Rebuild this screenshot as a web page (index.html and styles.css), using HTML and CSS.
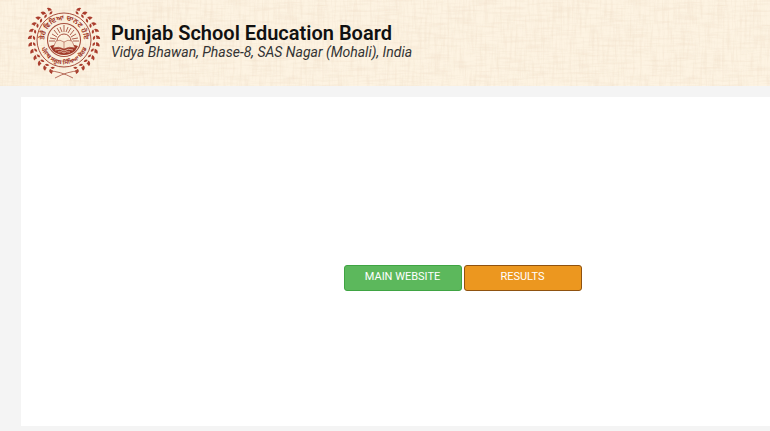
FILE: index.html
```html
<!DOCTYPE html>
<html lang="en">
<head>
  <meta charset="UTF-8" />
  <meta name="viewport" content="width=device-width, initial-scale=1.0"/>
  <title>Punjab School Education Board</title>
  <link rel="stylesheet" href="styles.css">
</head>
<body>

  <header class="header">
    <svg class="logo" viewBox="-36 -36 72 72" aria-hidden="true">
      <defs>
        <g id="leaf">
          <path d="M0 -32 Q0 -36 4 -36 Q4 -32 0 -32Z"/>
          <path d="M0 -31 Q1 -28 4 -29 Q3 -32 0 -31Z"/>
          <circle cx="3" cy="-33" r="0.7"/>
        </g>
        <g id="branch">
          <use href="#leaf" transform="rotate(22)"/>
          <use href="#leaf" transform="rotate(34)"/>
          <use href="#leaf" transform="rotate(46)"/>
          <use href="#leaf" transform="rotate(58)"/>
          <use href="#leaf" transform="rotate(70)"/>
          <use href="#leaf" transform="rotate(82)"/>
          <use href="#leaf" transform="rotate(94)"/>
          <use href="#leaf" transform="rotate(106)"/>
          <use href="#leaf" transform="rotate(118)"/>
          <use href="#leaf" transform="rotate(130)"/>
          <use href="#leaf" transform="rotate(142)"/>
          <use href="#leaf" transform="rotate(154)"/>
        </g>
        <path id="arc-top" d="M-18 8 A19.700 19.700 0 1 1 18 8"/>
        <path id="arc-bottom" d="M-24 -3 A24.200 24.200 0 1 0 24 -3"/>
      </defs>
      <g transform="translate(0 -3)">
        <g fill="#aa3d2d">
          <use href="#branch" transform="scale(-1 1)"/>
          <use href="#branch"/>
        </g>
        <g fill="none" stroke="#a8503f">
          <path d="M-15 31 Q-4 31 9 38 M15 31 Q4 31 -9 38" stroke-width="0.8"/>
          <circle r="27" stroke-width="1"/>
          <circle r="16.500" stroke-width="1.1"/>
          <path d="M-7 1 A7 7 0 0 1 7 1" stroke-width="1"/>
          <path stroke-width="0.9" d="M0 -8V-15 M-2 -8L-4 -13 M2 -8L4 -13 M-4 -7L-7 -12 M4 -7L7 -12 M-6 -5L-10 -10 M6 -5L10 -10 M-7 -3L-12 -6 M7 -3L12 -6 M-8 -1L-14 -2 M8 -1L14 -2 M-9 1L-15 1 M9 1L15 1"/>
        </g>
        <path fill="#a13828" d="M-14 6 Q-7 3 0 6 Q7 3 14 6 L11 11 Q6 15 0 15 Q-6 15 -11 11Z"/>
        <path fill="#f8e5d0" stroke="#a8503f" stroke-width="0.6" d="M-8 1 Q-4 -1 0 2 Q4 -1 8 1 L11 8 Q5 6 0 9 Q-5 6 -11 8Z M0 2V9"/>
        <path fill="none" stroke="#f8e5d0" stroke-width="0.7" d="M-9 10 Q-4 8 0 11 Q4 8 9 10 M-6 12 Q-2 11 0 13 Q2 11 6 12"/>
        <g class="logo-text">
          <text class="motto"><textPath href="#arc-top" startOffset="50%">ਤੇਰੈ ਵਿਦਿਆ ਚਾਨਣ ਹੋਇ</textPath></text>
          <text><textPath href="#arc-bottom" startOffset="50%">ਪੰਜਾਬ ਸਕੂਲ ਸਿੱਖਿਆ ਬੋਰਡ</textPath></text>
        </g>
      </g>
    </svg>
    <div class="title">
      <h1>Punjab School Education Board</h1>
      <p class="address">Vidya Bhawan, Phase-8, SAS Nagar (Mohali), India</p>
    </div>
  </header>

  <main class="container">
    <button type="button" class="btn btn-main">MAIN WEBSITE</button>
    <button type="button" class="btn btn-results">RESULTS</button>
  </main>

</body>
</html>
```

FILE: styles.css
```css
* {
  box-sizing: border-box;
}

body {
  font-family: Roboto, "Liberation Sans", sans-serif;
  margin: 0;
  min-height: 100vh;
  display: flex;
  flex-direction: column;
  background-color: #f4f4f4;
  color: #111;
}

/* linen texture: one layer of vertical threads, one of horizontal */
.header {
  display: flex;
  align-items: center;
  gap: 11px;
  padding: 7px 28px;
  background-color: #fdf3e2;
  background-image:
    url("data:image/svg+xml,%3Csvg xmlns='http://www.w3.org/2000/svg' width='400' height='200'%3E%3Cfilter id='a' x='0' y='0' width='1' height='1'%3E%3CfeTurbulence type='fractalNoise' baseFrequency='.4 .04' numOctaves='3' stitchTiles='stitch'/%3E%3CfeColorMatrix values='0 0 0 0 .87 0 0 0 0 .74 0 0 0 0 .59 1 0 0 0 -.42'/%3E%3C/filter%3E%3Crect width='400' height='200' filter='url(%23a)'/%3E%3C/svg%3E"),
    url("data:image/svg+xml,%3Csvg xmlns='http://www.w3.org/2000/svg' width='400' height='200'%3E%3Cfilter id='a' x='0' y='0' width='1' height='1'%3E%3CfeTurbulence type='fractalNoise' baseFrequency='.04 .4' numOctaves='3' seed='4' stitchTiles='stitch'/%3E%3CfeColorMatrix values='0 0 0 0 .87 0 0 0 0 .74 0 0 0 0 .59 1 0 0 0 -.42'/%3E%3C/filter%3E%3Crect width='400' height='200' filter='url(%23a)'/%3E%3C/svg%3E");
}

.logo {
  width: 72px;
  height: 72px;
  flex: none;
  overflow: visible;
}

.logo-text {
  font-family: "Noto Sans Gurmukhi", "Noto Sans", sans-serif;
  font-size: 6px;
  font-weight: bold;
  text-anchor: middle;
  fill: #a13828;
}

.motto {
  font-size: 7px;
}

.title {
  padding-bottom: 4px;
}

h1 {
  margin: 0;
  font-size: 20px;
  font-weight: 600;
  line-height: 22px;
}

.address {
  margin: 0;
  font-size: 14px;
  font-style: italic;
  line-height: 16px;
  color: #333;
}

.container {
  flex: 1;
  display: flex;
  align-items: center;
  justify-content: center;
  gap: 2px;
  margin: 11px 0 5px 21px;
  padding: 32px 0 0 134px;
  background-color: #fff;
}

.btn {
  width: 118px;
  height: 26px;
  padding: 0 0 2px;
  border: 1px solid;
  border-radius: 3px;
  font-family: inherit;
  font-size: 11px;
  color: #fff;
  cursor: pointer;
}

.btn-main {
  background-color: #5cb85c;
  border-color: #3fa443;
}

.btn-results {
  background-color: #ec971f;
  border-color: #8f5210;
}
```
